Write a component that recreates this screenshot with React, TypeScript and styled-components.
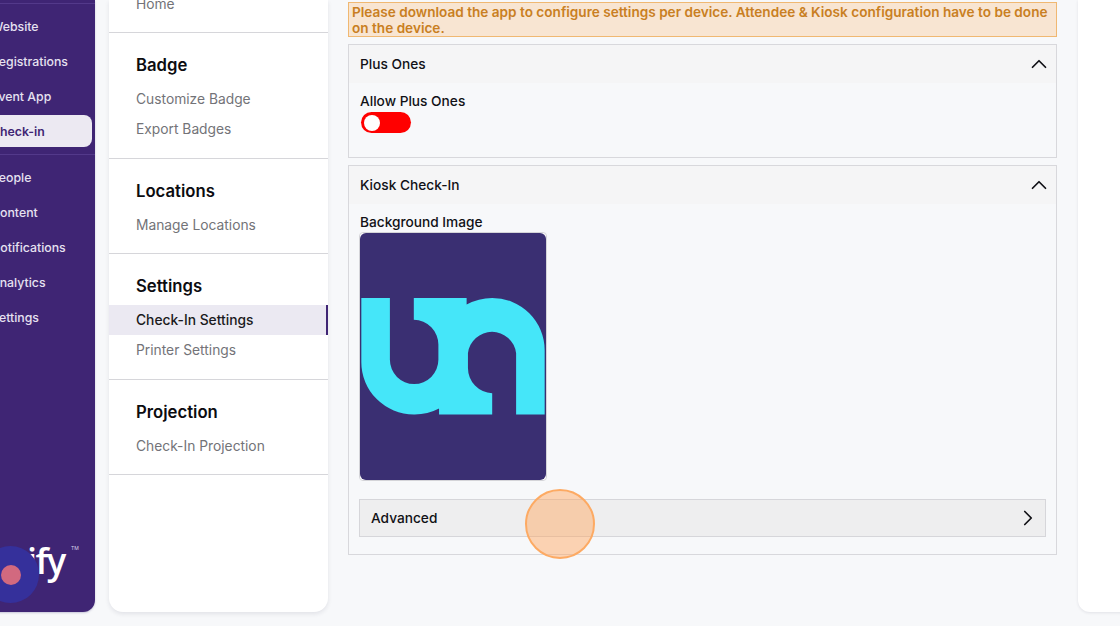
import React from "react";
import styled, { createGlobalStyle } from "styled-components";
import { ChevronUp, ChevronRight } from "lucide-react";

const Global = createGlobalStyle`
  html, body { margin: 0; padding: 0; background: #f7f8fa; }
  body { font-family: Inter, "Liberation Sans", sans-serif; -webkit-font-smoothing: antialiased; }
  * { box-sizing: border-box; }
`;

const Page = styled.div`
  position: relative;
  width: 1120px;
  height: 626px;
  overflow: hidden;
  display: flex;
  align-items: flex-start;
  background: #f7f8fa;
`;

const Sidebar = styled.aside`
  position: relative;
  flex: none;
  width: 205px;
  height: 612px;
  margin-left: -110px;
  padding: 3px 0 0;
  display: flex;
  flex-direction: column;
  background: #3f2574;
  border-radius: 0 0 12px 0;
  box-shadow: 0 1px 2px rgba(60, 50, 120, 0.25);
  overflow: hidden;
`;

const NavGroup = styled.nav`
  display: flex;
  flex-direction: column;
  border-top: 1px solid #53398a;
  padding-top: 4.5px;
`;

const NavItem = styled.div<{ $active?: boolean }>`
  height: ${(p) => (p.$active ? "32px" : "35px")};
  margin: ${(p) => (p.$active ? "1.5px 3px 1.5px 0" : "0 3px 0 0")};
  padding-left: 101px;
  display: flex;
  align-items: center;
  font-size: 12.3px;
  font-weight: ${(p) => (p.$active ? 600 : 500)};
  color: ${(p) => (p.$active ? "#3f2574" : "#e6e1f0")};
  background: ${(p) => (p.$active ? "#ece9f2" : "transparent")};
  border-radius: ${(p) => (p.$active ? "8px" : "0")};
`;

const SecondNavGroup = styled(NavGroup)`
  margin-top: 5px;
  padding-top: 5px;
`;

const LogoText = styled.div`
  position: absolute;
  left: 137px;
  top: 534px;
  font-family: "Open Sans", sans-serif;
  font-size: 36px;
  line-height: 54px;
  font-weight: 600;
  letter-spacing: -1.5px;
  color: #ffffff;
`;

const Tm = styled.span`
  position: absolute;
  left: 181px;
  top: 545px;
  font-size: 5px;
  line-height: 6px;
  color: #d9d3e8;
`;

const LogoDisc = styled.div`
  position: absolute;
  left: 92px;
  top: 546px;
  width: 57px;
  height: 57px;
  border-radius: 50%;
  background: #35309b;
  display: flex;
  align-items: center;
  justify-content: center;
`;

const LogoDot = styled.div`
  width: 20px;
  height: 20px;
  border-radius: 50%;
  background: #d2697f;
`;

const SubPanel = styled.section`
  flex: none;
  width: 219px;
  height: 612px;
  margin-left: 14px;
  background: #ffffff;
  border-radius: 0 0 14px 14px;
  box-shadow: 0 2px 4px rgba(40, 40, 70, 0.1);
  overflow: hidden;
`;

const SubSection = styled.div<{ $first?: boolean }>`
  padding: ${(p) => (p.$first ? "0" : "20px")} 0 13px;
  margin-top: ${(p) => (p.$first ? "-11px" : "0")};
  border-bottom: 1px solid #d6d6da;
`;

const SubHeading = styled.h3`
  margin: 0 0 7px;
  padding-left: 27px;
  height: 24px;
  line-height: 24px;
  font-size: 16.7px;
  font-weight: 600;
  color: #0c0c10;
`;

const SubItem = styled.div<{ $active?: boolean }>`
  height: 30px;
  padding: 0 0 1px 27px;
  display: flex;
  align-items: center;
  font-size: 13.8px;
  color: ${(p) => (p.$active ? "#1a1a20" : "#737378")};
  font-weight: ${(p) => (p.$active ? 450 : 400)};
  background: ${(p) => (p.$active ? "#ebe9f2" : "transparent")};
  border-right: ${(p) => (p.$active ? "2px solid #3f2574" : "none")};

  & + & {
    margin-bottom: 1px;
  }
`;

const Main = styled.main`
  flex: none;
  width: 709px;
  margin: 2px 0 0 20px;
  display: flex;
  flex-direction: column;
  gap: 7px;
`;

const Alert = styled.div`
  height: 35px;
  padding: 1px 3px;
  background: #f8e5d2;
  border: 1px solid #f0b872;
  font-size: 13.6px;
  line-height: 16px;
  font-weight: 600;
  color: #c97f22;
`;

const Card = styled.div<{ $h: number }>`
  height: ${(p) => p.$h}px;
  border: 1px solid #d8d8dc;
  background: #f7f8fa;
`;

const CardHeader = styled.div`
  height: 38px;
  padding: 0 10px 1px 11px;
  display: flex;
  align-items: center;
  justify-content: space-between;
  background: #f5f5f6;
  font-size: 13.7px;
  font-weight: 450;
  color: #111116;
`;

const CardBody = styled.div`
  padding: 10px 10px 0;
`;

const FieldLabel = styled.div`
  height: 16px;
  padding-left: 1px;
  line-height: 16px;
  font-size: 13.7px;
  font-weight: 450;
  color: #111116;
`;

const Toggle = styled.div`
  width: 50px;
  height: 21px;
  margin: 3px 0 0 2px;
  padding-left: 3px;
  display: flex;
  align-items: center;
  border-radius: 11px;
  background: #ff0000;
`;

const Knob = styled.div`
  width: 16px;
  height: 16px;
  border-radius: 50%;
  background: #ffffff;
`;

const ImageFrame = styled.div`
  width: 188px;
  height: 249px;
  margin-top: 2px;
  background: #ffffff;
  border: 1px solid #d4d4d8;
  border-radius: 4px;
`;

const LogoSvg = styled.svg`
  display: block;
  width: 100%;
  height: 100%;
`;

const Advanced = styled.div`
  height: 38px;
  margin-top: 18px;
  padding: 0 10px 0 11px;
  display: flex;
  align-items: center;
  justify-content: space-between;
  background: #eeeeef;
  border: 1px solid #d6d6da;
  font-size: 13.7px;
  font-weight: 450;
  color: #111116;
`;

const RightPanel = styled.section`
  flex: none;
  width: 100px;
  height: 612px;
  margin-left: 21px;
  background: #ffffff;
  border-radius: 0 0 0 12px;
  box-shadow: 0 1px 3px rgba(40, 40, 70, 0.1);
`;

const ClickMark = styled.div`
  position: absolute;
  left: 525px;
  top: 489px;
  width: 70px;
  height: 70px;
  border-radius: 50%;
  background: rgba(255, 165, 90, 0.45);
  border: 2.5px solid #fdaa63;
`;

const primary = ["Website", "Registrations", "Event App"];
const secondary = ["People", "Content", "Notifications", "Analytics", "Settings"];

export default function App() {
  return (
    <Page>
      <Global />
      <Sidebar>
        <NavGroup>
          {primary.map((n) => (
            <NavItem key={n}>{n}</NavItem>
          ))}
          <NavItem $active>Check-in</NavItem>
        </NavGroup>
        <SecondNavGroup>
          {secondary.map((n) => (
            <NavItem key={n}>{n}</NavItem>
          ))}
        </SecondNavGroup>
        <LogoText>ify</LogoText>
        <Tm>TM</Tm>
        <LogoDisc>
          <LogoDot />
        </LogoDisc>
      </Sidebar>

      <SubPanel>
        <SubSection $first>
          <SubItem>Home</SubItem>
        </SubSection>
        <SubSection>
          <SubHeading>Badge</SubHeading>
          <SubItem>Customize Badge</SubItem>
          <SubItem>Export Badges</SubItem>
        </SubSection>
        <SubSection>
          <SubHeading>Locations</SubHeading>
          <SubItem>Manage Locations</SubItem>
        </SubSection>
        <SubSection>
          <SubHeading>Settings</SubHeading>
          <SubItem $active>Check-In Settings</SubItem>
          <SubItem>Printer Settings</SubItem>
        </SubSection>
        <SubSection>
          <SubHeading>Projection</SubHeading>
          <SubItem>Check-In Projection</SubItem>
        </SubSection>
      </SubPanel>

      <Main>
        <Alert>
          Please download the app to configure settings per device. Attendee &amp; Kiosk configuration have to be done on the device.
        </Alert>
        <Card $h={114}>
          <CardHeader>
            Plus Ones
            <ChevronUp size={26} strokeWidth={1.6} color="#111116" style={{ marginRight: -6 }} />
          </CardHeader>
          <CardBody>
            <FieldLabel>Allow Plus Ones</FieldLabel>
            <Toggle>
              <Knob />
            </Toggle>
          </CardBody>
        </Card>
        <Card $h={390}>
          <CardHeader>
            Kiosk Check-In
            <ChevronUp size={26} strokeWidth={1.6} color="#111116" style={{ marginRight: -6 }} />
          </CardHeader>
          <CardBody>
            <FieldLabel>Background Image</FieldLabel>
            <ImageFrame>
              <LogoSvg viewBox="60 22 560 746" preserveAspectRatio="none">
                <rect x="60" y="22" width="560" height="746" rx="18" fill="#3a2f72" />
                <path
                  d="M64 218 H150 V405 A73 73 0 0 0 296 405 V360 A75 75 0 0 0 222 284 V218 H381 V238 A158 158 0 0 1 458 218 A158 158 0 0 1 616 376 V570 H530 V385 A73 73 0 0 0 385 385 V430 A76 76 0 0 0 458 506 V570 H298 V552 A158 158 0 0 1 222 570 A158 158 0 0 1 64 412 Z"
                  fill="#45e6f9"
                />
              </LogoSvg>
            </ImageFrame>
            <Advanced>
              Advanced
              <ChevronRight size={26} strokeWidth={1.6} color="#111116" style={{ marginRight: -6 }} />
            </Advanced>
          </CardBody>
        </Card>
      </Main>

      <RightPanel />
      <ClickMark />
    </Page>
  );
}
